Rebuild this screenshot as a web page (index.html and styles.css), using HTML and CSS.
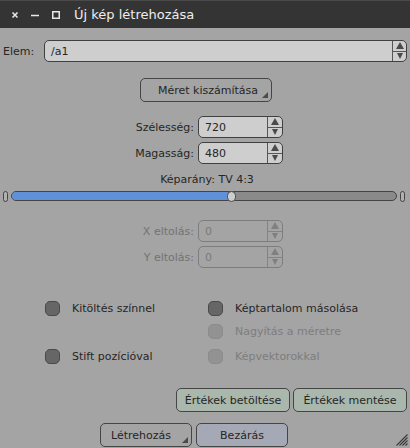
FILE: index.html
```html
<!DOCTYPE html>
<html>
<head>
<meta charset="utf-8">
<link rel="stylesheet" href="styles.css">
</head>
<body>
<div class="win">
  <div class="titlebar">
    <svg class="tb-icons" width="60" height="10" viewBox="0 0 60 10">
      <path d="M2.5 2.5 L7.5 7.5 M7.5 2.5 L2.5 7.5" stroke="#e8e8e8" stroke-width="1.6"/>
      <path d="M21 5.5 H29" stroke="#e8e8e8" stroke-width="1.5"/>
      <rect x="42.75" y="1.75" width="6.5" height="6.5" fill="none" stroke="#e8e8e8" stroke-width="1.5"/>
    </svg>
    <span class="tb-title">Új kép létrehozása</span>
  </div>
  <div class="content">
    <div class="row-elem">
      <span class="lbl">Elem:</span>
      <div class="spin wide">
        <span class="val">/a1</span>
        <div class="arrows"><span class="up"></span><span class="down"></span></div>
      </div>
    </div>
    <div class="center-row">
      <div class="btn menu calc">Méret kiszámítása<span class="corner"></span></div>
    </div>
    <div class="form">
      <span class="flbl">Szélesség:</span>
      <div class="spin small"><span class="val">720</span><div class="arrows"><span class="up"></span><span class="down"></span></div></div>
      <span class="flbl">Magasság:</span>
      <div class="spin small"><span class="val">480</span><div class="arrows"><span class="up"></span><span class="down"></span></div></div>
    </div>
    <div class="ratio">Képarány: TV 4:3</div>
    <div class="slider">
      <span class="endcap"></span>
      <div class="track"><div class="fill"></div><span class="handle"></span></div>
      <span class="endcap"></span>
    </div>
    <div class="form disabled off">
      <span class="flbl">X eltolás:</span>
      <div class="spin small"><span class="val">0</span><div class="arrows"><span class="up"></span><span class="down"></span></div></div>
      <span class="flbl">Y eltolás:</span>
      <div class="spin small"><span class="val">0</span><div class="arrows"><span class="up"></span><span class="down"></span></div></div>
    </div>
    <div class="checks">
      <div class="chk"><span class="box"></span>Kitöltés színnel</div>
      <div class="chk"><span class="box"></span>Képtartalom másolása</div>
      <div class="chk empty"></div>
      <div class="chk dis"><span class="box"></span>Nagyítás a méretre</div>
      <div class="chk"><span class="box"></span>Stift pozícióval</div>
      <div class="chk dis"><span class="box"></span>Képvektorokkal</div>
    </div>
    <div class="btnrow1">
      <div class="btn green">Értékek betöltése</div>
      <div class="btn green">Értékek mentése</div>
    </div>
    <div class="btnrow2">
      <div class="btn menu create">Létrehozás<span class="corner"></span></div>
      <div class="btn blue close">Bezárás</div>
    </div>
  </div>
  <svg class="grip" width="14" height="14" viewBox="0 0 14 14">
    <path d="M13.5 2.5 L2.5 13.5 M13.5 5.5 L5.5 13.5 M13.5 8.5 L8.5 13.5 M13.5 11.5 L11.5 13.5" stroke="#3a3a3a" stroke-width="1.1"/>
  </svg>
</div>
</body>
</html>
```
FILE: styles.css
```css
* { box-sizing: border-box; }
html, body { margin: 0; padding: 0; }
body {
  width: 410px; height: 448px; overflow: hidden;
  font-family: "DejaVu Sans", sans-serif;
  font-size: 11px; color: #262626;
  background: #a4a4a4;
}
.win { position: relative; width: 410px; height: 448px; background: #a4a4a4; }
.titlebar {
  height: 28px; background: #343434;
  display: flex; align-items: center;
  color: #f0f0f0;
  border-top: 1px solid #4a4a4a;
}
.tb-icons { margin-left: 10px; margin-top: 1px; }
.tb-title { margin-left: 4px; font-size: 13px; color: #eeeeee; }

.content { padding: 12px 3px 0 3px; }

.row-elem { display: flex; align-items: center; height: 22px; }
.lbl { width: 41px; }
.spin {
  display: flex; align-items: stretch;
  border: 1px solid #404040; border-radius: 5px;
  background: #cecece; height: 22px;
}
.spin .val { flex: 1; padding-left: 6px; display: flex; align-items: center; font-size: 11px; }
.spin.wide { width: 363px; }
.arrows { width: 14px; display: flex; flex-direction: column; border-left: 1px solid #555; }
.arrows span { flex: 1; display: flex; align-items: center; justify-content: center; }
.arrows .up { border-bottom: 1px solid #555; }
.arrows .up::after { content: ""; border-left: 4px solid transparent; border-right: 4px solid transparent; border-bottom: 7px solid #4a4a4a; }
.arrows .down::after { content: ""; border-left: 3.5px solid transparent; border-right: 3.5px solid transparent; border-top: 6px solid #4a4a4a; }

.center-row { display: flex; justify-content: center; margin-top: 16px; }
.btn {
  position: relative;
  display: flex; align-items: center; justify-content: center;
  border: 1px solid #454545; border-radius: 5px;
  height: 24px; font-size: 11px;
}
.calc { width: 132px; margin-left: 2px; padding-left: 4px; }
.corner {
  position: absolute; right: 3px; bottom: 3px;
  border-left: 6px solid transparent; border-bottom: 6px solid #4a4a4a;
}

.form {
  display: grid; grid-template-columns: 191px 85px;
  column-gap: 4px; row-gap: 4px; align-items: center;
  margin-top: 14px;
}
.flbl { text-align: right; font-size: 11px; }
.spin.small { width: 85px; height: 22px; }
.spin.small .arrows { width: 15px; }

.ratio { text-align: center; margin-top: 9px; font-size: 11px; padding-left: 4px; height: 13px; line-height: 13px; }

.slider { display: flex; align-items: center; margin-top: 4px; margin-left: 0; height: 12px; }
.endcap { width: 5px; height: 11px; border: 1px solid #444; border-radius: 3px; background: #b0b0b0; }
.slider .endcap:first-child { margin-right: 3px; }
.slider .endcap:last-child { margin-left: 3px; }
.track {
  position: relative; width: 386px; height: 10px;
  background: #8a8a8a; border: 1px solid #444; border-radius: 5px;
}
.fill { width: 218px; height: 100%; background: #6090d8; border-radius: 4px 0 0 4px; }
.handle {
  position: absolute; left: 215px; top: -1px;
  width: 9px; height: 11px; border-radius: 5px;
  background: #cdcdcd; border: 1px solid #4a4a4a;
}

.off { margin-top: 18px; }
.disabled .flbl { color: #737373; }
.disabled .spin { background: #a4a4a4; border-color: #7d7d7d; }
.disabled .spin .val { color: #7a7a7a; }
.disabled .arrows, .disabled .arrows .up { border-color: #838383; }
.disabled .arrows .up::after { border-bottom-color: #808080; }
.disabled .arrows .down::after { border-top-color: #808080; }

.checks {
  display: grid; grid-template-columns: 163px 180px;
  margin-top: 29px; margin-left: 42px;
  grid-auto-rows: auto;
}
.chk { display: flex; align-items: center; height: 23px; font-size: 11px; }
.chk:nth-child(5), .chk:nth-child(6) { margin-top: 2px; }
.chk .box {
  width: 15px; height: 15px; border-radius: 5px;
  background: #666; border: 1px solid #4a4a4a;
  margin-right: 12px;
}
.chk.dis { color: #7d7d7d; }
.chk.dis .box { background: #929292; border-color: #8c8c8c; }

.btnrow1 { display: flex; justify-content: flex-end; gap: 3px; margin-top: 20px; }
.green { background: #a9b7ad; width: 114px; height: 24px; }
.btnrow2 { display: flex; gap: 4px; margin-top: 11px; margin-left: 97px; }
.create { width: 92px; padding-right: 10px; }
.close { width: 92px; background: #a5a9b6; }
.grip { position: absolute; right: 2px; bottom: 2px; }
```
